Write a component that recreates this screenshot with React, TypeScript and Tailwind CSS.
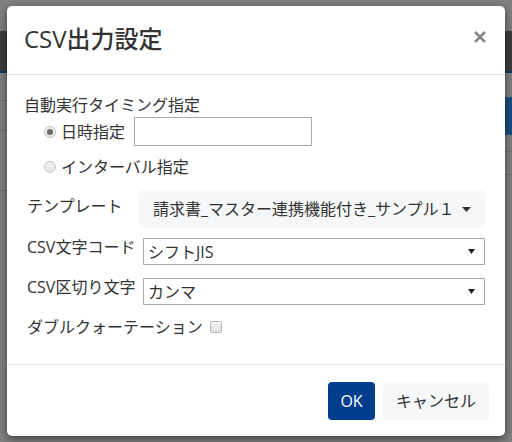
import React from 'react';

const font = { fontFamily: '"Open Sans", "Noto Sans CJK JP", sans-serif' };

// --- Background page (dimmed by the modal backdrop) ---
const PageBehind = () => (
  <div className="w-[512px] h-[442px] bg-white overflow-hidden flex flex-col">
    <div className="h-[31px] shrink-0 bg-white" />
    <div className="h-[42px] shrink-0 bg-[#7a7a7a] border-b-[2px] border-[#2f62b8]" />
    <div className="flex flex-1">
      <div className="flex-1 flex flex-col">
        <div className="h-[28px] border-b border-[#d4d4d4]" />
        <div className="h-[30px] border-b border-[#d4d4d4]" />
        <div className="h-[60px] border-b border-[#d4d4d4]" />
      </div>
      <div className="w-[60px] flex flex-col">
        <div className="h-[24px]" />
        <div className="h-[38px] bg-[#3a98ff]" />
        <div className="h-[17px] border-b border-[#d4d4d4]" />
        <div className="h-[23px] border-b border-[#d4d4d4]" />
      </div>
    </div>
  </div>
);

const Radio = ({ checked }: { checked?: boolean }) => (
  <span className="w-[12px] h-[12px] rounded-full border border-[#c4c4c4] bg-gradient-to-b from-[#f4f4f4] to-[#e2e2e2] flex items-center justify-center shrink-0">
    {checked && <span className="w-[6px] h-[6px] rounded-full bg-[#6b6b6b]" />}
  </span>
);

const SelectBox = ({ value }: { value: string }) => (
  <div className="mt-[3px] w-[342px] h-[27px] border border-[#a9a9a9] bg-white flex items-center justify-between pl-[4px] pr-[9px] text-[16px] text-[#333]">
    <span>{value}</span>
    <svg width="7" height="5" viewBox="0 0 7 5">
      <path d="M0 0 L7 0 L3.5 5 Z" fill="#222" />
    </svg>
  </div>
);

export default function App() {
  return (
    <div className="relative w-[512px] h-[442px] overflow-hidden" style={font}>
      <PageBehind />
      <div className="absolute inset-0 bg-black/50" />

      {/* modal */}
      <div className="absolute left-[7px] top-[6px] w-[498px] h-[430px] bg-white rounded-[5px] shadow-[0_3px_9px_rgba(0,0,0,0.5)] flex flex-col text-[#333]">
        <div className="h-[69px] shrink-0 border-b border-[#e2e2e2] flex items-center justify-between pl-[17px] pr-[19px]">
          <h4 className="text-[24px] font-medium text-[#333] leading-none pb-[2px]">CSV出力設定</h4>
          <svg width="12" height="12" viewBox="0 0 12 12" className="mt-[-6px]">
            <path d="M1 1 L11 11 M11 1 L1 11" stroke="#888" strokeWidth="2.6" />
          </svg>
        </div>

        <div className="flex-1 pl-[17px] pt-[18px] text-[16px] leading-[24px]">
          <div>自動実行タイミング指定</div>

          <div className="flex items-center ml-[20px]">
            <Radio checked />
            <span className="ml-[5px]">日時指定</span>
            <input className="ml-[9px] w-[178px] h-[29px] border border-[#a9a9a9] outline-none" />
          </div>

          <div className="flex items-center ml-[20px] mt-[9px]">
            <Radio />
            <span className="ml-[5px]">インターバル指定</span>
          </div>

          <div className="flex items-start mt-[11px]">
            <span className="w-[115px] pl-[3px] pt-[4px]">テンプレート</span>
            <div className="w-[346px] h-[38px] rounded-[5px] bg-[#f6f7f9] flex items-center justify-between pl-[14px] pr-[14px]">
              <span>請求書_マスター連携機能付き_サンプル１</span>
              <svg width="9" height="5" viewBox="0 0 9 5">
                <path d="M0 0 L9 0 L4.5 5 Z" fill="#333" />
              </svg>
            </div>
          </div>

          <div className="flex items-start mt-[7px]">
            <span className="w-[119px] pl-[3px]">CSV文字コード</span>
            <SelectBox value="シフトJIS" />
          </div>

          <div className="flex items-start mt-[10px]">
            <span className="w-[119px] pl-[3px]">CSV区切り文字</span>
            <SelectBox value="カンマ" />
          </div>

          <div className="flex items-center mt-[10px] pl-[3px]">
            <span>ダブルクォーテーション</span>
            <span className="ml-[7px] w-[12px] h-[12px] rounded-[2px] border border-[#b5b5b5] bg-gradient-to-b from-[#f2f2f2] to-[#e0e0e0]" />
          </div>
        </div>

        <div className="h-[72px] shrink-0 border-t border-[#e2e2e2] flex items-center justify-end gap-[8px] pr-[16px] pt-[1px]">
          <button className="w-[47px] h-[38px] rounded-[4px] bg-[#003d8c] text-white text-[16px]">OK</button>
          <button className="w-[106px] h-[38px] rounded-[4px] bg-[#f6f7f9] text-[#333] text-[16px]">キャンセル</button>
        </div>
      </div>
    </div>
  );
}
